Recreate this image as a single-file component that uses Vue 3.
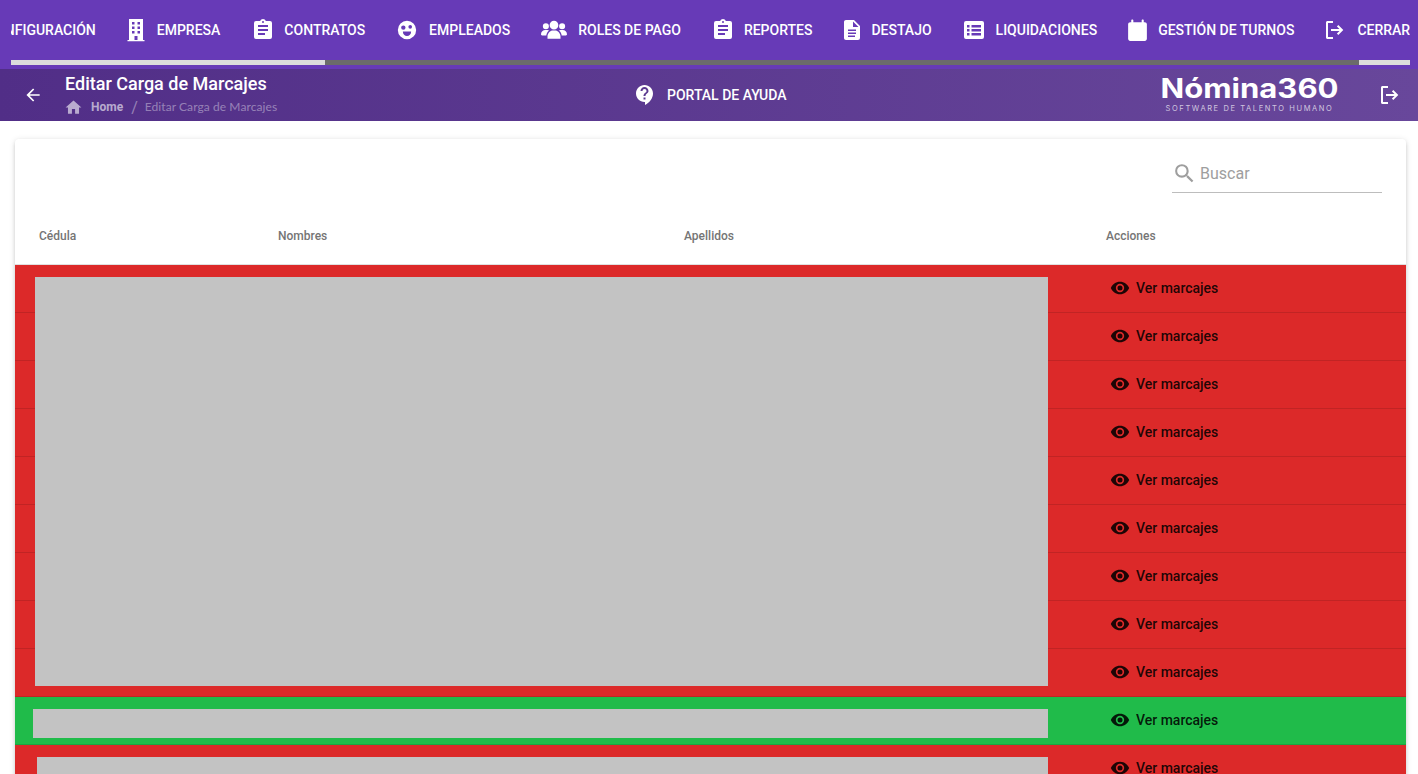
<template>
  <div class="page">
    <header class="topbar">
      <nav class="menu">
        <div class="menu-track">
          <a
            v-for="item in menu"
            :key="item.label"
            class="menu-item"
            :style="{ marginLeft: item.lead + 'px', gap: item.gap + 'px' }"
          >
            <svg v-if="item.icon" class="menu-icon" :style="{ width: item.size + 'px', height: item.size + 'px' }" viewBox="0 0 24 24">
              <path fill="currentColor" fill-rule="evenodd" :d="icons[item.icon]" />
            </svg>
            {{ item.label }}
          </a>
        </div>
      </nav>
      <div class="scrollbar">
        <div class="scrollbar-start"></div>
        <div class="scrollbar-rail"></div>
        <div class="scrollbar-end"></div>
      </div>
    </header>

    <section class="subbar">
      <button class="subbar-back">
        <svg viewBox="0 0 24 24"><path fill="currentColor" :d="icons.back" /></svg>
      </button>
      <div class="subbar-title">
        <h1>Editar Carga de Marcajes</h1>
        <div class="crumbs">
          <svg viewBox="0 0 24 24"><path fill="currentColor" :d="icons.home" /></svg>
          <span class="crumb-home">Home</span>
          <span class="crumb-sep">/</span>
          <span class="crumb-current">Editar Carga de Marcajes</span>
        </div>
      </div>
      <a class="help">
        <svg viewBox="0 0 24 24"><path fill="currentColor" fill-rule="evenodd" :d="icons.help" /></svg>
        PORTAL DE AYUDA
      </a>
      <div class="logo">
        <div class="logo-name">Nómina360</div>
        <div class="logo-sub">SOFTWARE DE TALENTO HUMANO</div>
      </div>
      <svg class="subbar-exit" viewBox="0 0 24 24"><path fill="currentColor" fill-rule="evenodd" :d="icons.logout" /></svg>
    </section>

    <main class="content">
      <div class="card">
        <div class="search-row">
          <label class="search">
            <svg viewBox="0 0 24 24"><path fill="currentColor" :d="icons.search" /></svg>
            <input type="text" placeholder="Buscar" />
          </label>
        </div>
        <div class="table-head">
          <div>Cédula</div>
          <div>Nombres</div>
          <div>Apellidos</div>
          <div>Acciones</div>
        </div>
        <div class="table-body">
          <div v-for="row in rows" :key="row.id" class="table-row" :class="row.ok ? 'is-ok' : 'is-bad'">
            <div></div>
            <div></div>
            <div></div>
            <div class="row-action">
              <svg viewBox="0 0 24 24"><path fill="currentColor" :d="icons.eye" /></svg>
              Ver marcajes
            </div>
          </div>
          <div class="mask mask-a"></div>
          <div class="mask mask-b"></div>
          <div class="mask mask-c"></div>
        </div>
      </div>
    </main>
  </div>
</template>

<script setup>
const icons = {
  building: "M5,1H19V22H5V1ZM8,4V6.5H10.5V4H8ZM13.5,4V6.5H16V4H13.5ZM8,8.5V11H10.5V8.5H8ZM13.5,8.5V11H16V8.5H13.5ZM8,13V15.5H10.5V13H8ZM13.5,13V15.5H16V13H13.5ZM10.5,18V22H13.5V18H10.5ZM3.5,22H20.5V23.3H3.5Z",
  clipboard: "M17,9H7V7H17V9M17,13H7V11H17V13M14,17H7V15H14V17M12,3A1,1 0 0,1 13,4A1,1 0 0,1 12,5A1,1 0 0,1 11,4A1,1 0 0,1 12,3M19,3H14.82C14.4,1.84 13.3,1 12,1C10.7,1 9.6,1.84 9.18,3H5A2,2 0 0,0 3,5V19A2,2 0 0,0 5,21H19A2,2 0 0,0 21,19V5A2,2 0 0,0 19,3Z",
  face: "M12,2A10,10 0 1,0 12,22A10,10 0 1,0 12,2ZM8,7A2.4,2.4 0 1,1 8,11.8A2.4,2.4 0 1,1 8,7ZM15.5,6.5A2,2 0 1,1 15.5,10.5A2,2 0 1,1 15.5,6.5ZM7.5,13.5H16.5C16.5,16.5 14.5,18.5 12,18.5C9.5,18.5 7.5,16.5 7.5,13.5Z",
  group: "M12,3.5A4,4 0 1,1 12,11.5A4,4 0 1,1 12,3.5ZM4.5,5.7A2.8,2.8 0 1,1 4.5,11.3A2.8,2.8 0 1,1 4.5,5.7ZM19.5,5.7A2.8,2.8 0 1,1 19.5,11.3A2.8,2.8 0 1,1 19.5,5.7ZM6,20V18C6,15 8.5,12.5 11,12.5H13C15.5,12.5 18,15 18,18V20ZM0,16C0,13.5 1.8,12 4,12H6C6.6,12 7,12.2 7.4,12.4C6,13.6 5,15.4 4.9,17H1C0.4,17 0,16.6 0,16ZM24,16C24,13.5 22.2,12 20,12H18C17.4,12 17,12.2 16.6,12.4C18,13.6 19,15.4 19.1,17H23C23.6,17 24,16.6 24,16Z",
  file: "M13,9H18.5L13,3.5V9M6,2H14L20,8V20A2,2 0 0,1 18,22H6C4.89,22 4,21.1 4,20V4C4,2.89 4.89,2 6,2M15,19V17.5H8V19H15M16,16V14.5H8V16H16M16,13V11.5H8V13H16Z",
  list: "M4,3H20A2,2 0 0,1 22,5V19A2,2 0 0,1 20,21H4A2,2 0 0,1 2,19V5A2,2 0 0,1 4,3ZM5,7V9.5H7.5V7H5ZM9.5,7V9.5H19V7H9.5ZM5,11V13.5H7.5V11H5ZM9.5,11V13.5H19V11H9.5ZM5,15V17.5H7.5V15H5ZM9.5,15V17.5H19V15H9.5Z",
  calendar: "M19,4H18V2.5C18,1.9 17.6,1.5 17,1.5S16,1.9 16,2.5V4H8V2.5C8,1.9 7.6,1.5 7,1.5S6,1.9 6,2.5V4H5C3.9,4 3,4.9 3,6V20C3,21.1 3.9,22 5,22H19C20.1,22 21,21.1 21,20V6C21,4.9 20.1,4 19,4Z",
  logout: "M5.5,3H11V5H6V19H11V21H5.5C4.7,21 4,20.3 4,19.5V4.5C4,3.7 4.7,3 5.5,3ZM16.3,7L21.3,12L16.3,17L14.9,15.6L17.5,13H9V11H17.5L14.9,8.4L16.3,7Z",
  back: "M20,11V13H8L13.5,18.5L12.08,19.92L4.16,12L12.08,4.08L13.5,5.5L8,11H20Z",
  home: "M10,20V14H14V20H19V12H22L12,3L2,12H5V20H10Z",
  help: "M11.5,2C6.81,2 3,5.81 3,10.5S6.81,19 11.5,19H12V22C16.86,19.66 20,15 20,10.5C20,5.81 16.19,2 11.5,2ZM12.5,16.5H10.5V14.5H12.5V16.5ZM12.5,13H10.5C10.5,9.75 13.5,10 13.5,8C13.5,6.9 12.6,6 11.5,6S9.5,6.9 9.5,8H7.5C7.5,5.79 9.29,4 11.5,4S15.5,5.79 15.5,8C15.5,10.5 12.5,10.75 12.5,13Z",
  search: "M9.5,3A6.5,6.5 0 0,1 16,9.5C16,11.11 15.41,12.59 14.44,13.73L14.71,14H15.5L20.5,19L19,20.5L14,15.5V14.71L13.73,14.44C12.59,15.41 11.11,16 9.5,16A6.5,6.5 0 0,1 3,9.5A6.5,6.5 0 0,1 9.5,3M9.5,5C7,5 5,7 5,9.5C5,12 7,14 9.5,14C12,14 14,12 14,9.5C14,7 12,5 9.5,5Z",
  eye: "M12,9A3,3 0 0,0 9,12A3,3 0 0,0 12,15A3,3 0 0,0 15,12A3,3 0 0,0 12,9M12,17A5,5 0 0,1 7,12A5,5 0 0,1 12,7A5,5 0 0,1 17,12A5,5 0 0,1 12,17M12,4.5C7,4.5 2.73,7.61 1,12C2.73,16.39 7,19.5 12,19.5C17,19.5 21.27,16.39 23,12C21.27,7.61 17,4.5 12,4.5Z",
};

// lead: espacio antes del icono, gap: entre icono y texto
const menu = [
  { label: "CONFIGURACIÓN", lead: -25, gap: 0 },
  { label: "EMPRESA", icon: "building", size: 24, lead: 28, gap: 9 },
  { label: "CONTRATOS", icon: "clipboard", size: 24, lead: 31, gap: 9 },
  { label: "EMPLEADOS", icon: "face", size: 22, lead: 31, gap: 11 },
  { label: "ROLES DE PAGO", icon: "group", size: 26, lead: 31, gap: 11 },
  { label: "REPORTES", icon: "clipboard", size: 24, lead: 30, gap: 9 },
  { label: "DESTAJO", icon: "file", size: 24, lead: 28, gap: 7 },
  { label: "LIQUIDACIONES", icon: "list", size: 24, lead: 30, gap: 10 },
  { label: "GESTIÓN DE TURNOS", icon: "calendar", size: 25, lead: 28, gap: 8 },
  { label: "CERRAR", icon: "logout", size: 24, lead: 28, gap: 11 },
];

const rows = Array.from({ length: 11 }, (_, i) => ({ id: i, ok: i === 9 }));
</script>

<style>
html,
body {
  margin: 0;
  height: 100%;
  overflow: hidden;
  background: #fff;
}
</style>

<style scoped>
.page {
  height: 774px;
  overflow: hidden;
  font-family: Roboto, "Liberation Sans", sans-serif;
  color: #000;
}

.topbar {
  height: 69px;
  padding: 0 8px 0 11px;
  background: #673ab7;
  box-sizing: border-box;
}

.menu {
  height: 60px;
  overflow: hidden;
}

.menu-track {
  display: flex;
  align-items: center;
  height: 60px;
}

.menu-item {
  display: flex;
  flex-shrink: 0;
  align-items: center;
  color: #fff;
  font-size: 14px;
  font-weight: 500;
  white-space: nowrap;
}

.menu-icon {
  flex-shrink: 0;
}

.scrollbar {
  display: flex;
  height: 5px;
}

.scrollbar-start {
  width: 314px;
  background: #dcdcdc;
}

.scrollbar-rail {
  flex: 1;
  background: #6b6b6b;
}

.scrollbar-end {
  width: 51px;
  background: #dcdcdc;
}

.subbar {
  display: flex;
  align-items: center;
  height: 52px;
  background: linear-gradient(90deg, #512e87, #68479b);
  color: #fff;
}

.subbar-back {
  display: flex;
  align-items: center;
  justify-content: center;
  width: 65px;
  padding: 0;
  border: 0;
  background: none;
  color: #fff;
}

.subbar-back svg {
  width: 20px;
  height: 20px;
}

.subbar-title {
  width: 568px;
}

.subbar-title h1 {
  margin: 0 0 4px;
  font-size: 18px;
  font-weight: 500;
  line-height: 20px;
}

.crumbs {
  display: flex;
  align-items: center;
  height: 18px;
  font-size: 12px;
  color: rgba(255, 255, 255, 0.4);
}

.crumbs svg {
  width: 19px;
  height: 19px;
  margin: 0 8px 0 -1px;
  color: rgba(255, 255, 255, 0.6);
}

.crumb-home {
  font-weight: 700;
  color: rgba(255, 255, 255, 0.6);
}

.crumb-sep {
  margin: 0 8px;
  font-size: 16px;
}

.crumb-current {
  margin: 0 0 1px -1px;
  font-family: Lato, Roboto, sans-serif;
  letter-spacing: 0.08px;
}

.help {
  display: flex;
  align-items: center;
  gap: 10px;
  width: 527px;
  font-size: 14px;
  font-weight: 500;
}

.help svg {
  width: 24px;
  height: 24px;
}

.logo {
  width: 179px;
  margin-bottom: 4px;
  text-align: center;
}

.logo-name {
  font-family: Inter, "Open Sans", sans-serif;
  font-size: 27px;
  font-weight: 700;
  line-height: 29px;
  transform: scaleX(1.15);
}

.logo-sub {
  margin-top: 1px;
  font-family: Inter, "Open Sans", sans-serif;
  font-size: 7.5px;
  line-height: 9px;
  letter-spacing: 1.6px;
  color: rgba(255, 255, 255, 0.7);
}

.subbar-exit {
  width: 24px;
  height: 24px;
  margin-left: 38px;
}

.content {
  padding: 18px 12px 0 15px;
}

.card {
  border-radius: 4px;
  background: #fff;
  box-shadow: 0 2px 4px -1px rgba(0, 0, 0, 0.2), 0 1px 6px 0 rgba(0, 0, 0, 0.12);
}

.search-row {
  display: flex;
  justify-content: flex-end;
  height: 73px;
  padding: 16px 24px 0 0;
  box-sizing: border-box;
}

.search {
  display: flex;
  align-items: center;
  gap: 3px;
  width: 210px;
  height: 38px;
  padding-bottom: 1px;
  border-bottom: 1px solid #bdbdbd;
  box-sizing: border-box;
  color: #9e9e9e;
}

.search svg {
  width: 25px;
  height: 25px;
}

.search input {
  flex: 1;
  min-width: 0;
  padding: 0;
  border: 0;
  outline: 0;
  background: none;
  font: 400 16px Roboto, "Liberation Sans", sans-serif;
}

.search input::placeholder {
  color: #9e9e9e;
  opacity: 1;
}

.table-head,
.table-row {
  display: grid;
  grid-template-columns: 239px 406px 422px 1fr;
  align-items: center;
  padding-left: 24px;
}

.table-head {
  height: 53px;
  padding-bottom: 4px;
  border-bottom: 1px solid #e0e0e0;
  box-sizing: border-box;
  font-size: 12px;
  font-weight: 500;
  color: #757575;
}

.table-body {
  position: relative;
}

.table-row {
  height: 48px;
  border-bottom: 1px solid rgba(0, 0, 0, 0.12);
  box-sizing: border-box;
}

.is-bad {
  background: #dc2929;
}

.is-ok {
  background: #20bb4a;
}

.row-action {
  display: flex;
  align-items: center;
  gap: 6px;
  padding-left: 4px;
  padding-bottom: 2px;
  font-size: 14px;
  font-weight: 500;
  color: rgba(0, 0, 0, 0.87);
}

.row-action svg {
  width: 20px;
  height: 20px;
}

/* bloques grises sobre los datos */
.mask {
  position: absolute;
  right: 358px;
  background: #c3c3c3;
}

.mask-a {
  top: 12px;
  left: 20px;
  height: 409px;
}

.mask-b {
  top: 444px;
  left: 18px;
  height: 29px;
}

.mask-c {
  top: 492px;
  left: 22px;
  height: 40px;
}
</style>
